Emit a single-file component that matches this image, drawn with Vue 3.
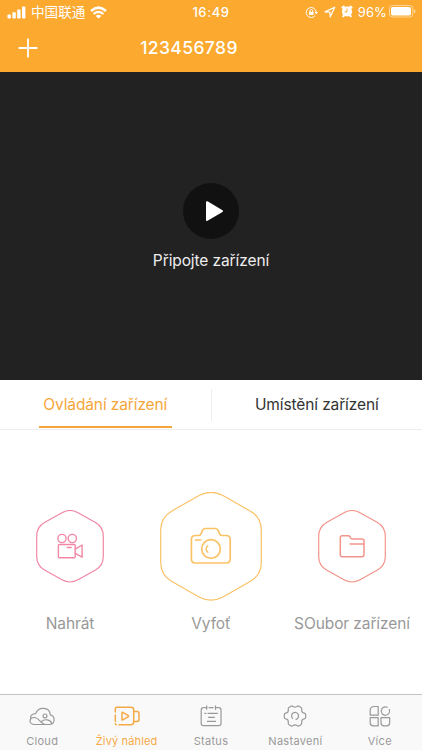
<script setup>
const actions = [
  { id: 'record', label: 'Nahrát' },
  { id: 'photo', label: 'Vyfoť' },
  { id: 'files', label: 'SOubor zařízení' },
]
const nav = [
  { id: 'cloud', label: 'Cloud' },
  { id: 'live', label: 'Živý náhled' },
  { id: 'status', label: 'Status' },
  { id: 'settings', label: 'Nastavení' },
  { id: 'more', label: 'Více' },
]
</script>

<template>
  <div class="screen">
    <header class="header">
      <div class="statusbar">
        <div class="side left">
          <svg class="signal" width="19" height="13" viewBox="0 0 19 13" fill="#fff">
            <rect x="0.5" y="8.5" width="3.4" height="4" rx="0.8" />
            <rect x="5.4" y="6.2" width="3.4" height="6.3" rx="0.8" />
            <rect x="10.2" y="3.6" width="3.4" height="8.9" rx="0.8" />
            <rect x="15" y="0.6" width="3.4" height="11.9" rx="0.8" />
          </svg>
          <span class="carrier">中国联通</span>
          <svg class="wifi" width="17" height="13" viewBox="0 0 17 13" fill="none" stroke="#fff">
            <path d="M1 5Q8.500-1.700 16 5" stroke-width="2.500" />
            <path d="M3.600 8Q8.500 3.800 13.400 8" stroke-width="2.300" />
            <path d="M8.500 12.600L5.700 9.900Q8.500 7.800 11.300 9.900Z" fill="#fff" stroke="none" />
          </svg>
        </div>
        <span class="time">16:49</span>
        <div class="side right">
          <svg class="lock" width="13" height="13" viewBox="0 0 13 13" fill="none" stroke="#fff">
            <path d="M10.300 9.400A5 5 0 1 1 11.200 6.100" stroke-width="1" />
            <path d="M9.500 5.900h3.500l-1.750 2.300z" fill="#fff" stroke="none" />
            <path d="M4.900 6V4.900a1.400 1.400 0 0 1 2.800 0V6" stroke-width="0.900" />
            <rect x="4.100" y="5.800" width="4.400" height="3.200" rx="0.500" fill="#fff" stroke="none" />
          </svg>
          <svg class="locate" width="12" height="12" viewBox="0 0 12 12" fill="none" stroke="#fff" stroke-linejoin="round">
            <path d="M1 5.900L10.700 1.200L6.200 10.900L5.900 6.100Z" stroke-width="1.200" />
          </svg>
          <svg class="alarm" width="12" height="13" viewBox="0 0 12 13">
            <path d="M1.500 2.600L2.700 1.600M10.500 2.600L9.300 1.600M2.300 11.200l.7-.8M9.700 11.200l-.7-.8" stroke="#fff" stroke-width="2.200" stroke-linecap="round" />
            <circle cx="6" cy="6.500" r="5.100" fill="#fff" />
            <path d="M6 3.600V6.900H3.500" fill="none" stroke="#fca92f" stroke-width="1" />
          </svg>
          <span class="percent">96%</span>
          <svg class="battery" width="27" height="13" viewBox="0 0 27 13">
            <rect x="0.500" y="0.500" width="23.400" height="11.500" rx="3" fill="none" stroke="#fed798" />
            <rect x="2" y="2" width="20" height="8.500" rx="1.700" fill="#fff" />
            <path d="M25 4.300q1.500 0.500 1.500 1.950t-1.500 1.950z" fill="#fed798" />
          </svg>
        </div>
      </div>
      <div class="titlebar">
        <svg class="plus" width="20" height="20" viewBox="0 0 20 20" stroke="#fff" stroke-width="1.800">
          <path d="M10 .5v19M.5 10h19" />
        </svg>
        <h1>123456789</h1>
      </div>
    </header>

    <section class="video">
      <button class="play" aria-label="Play">
        <svg width="56" height="56" viewBox="0 0 56 56">
          <path d="M24 19.200L39 28.100L24 37Z" fill="#fff" stroke="#fff" stroke-width="2" stroke-linejoin="round" />
        </svg>
      </button>
      <p>Připojte zařízení</p>
    </section>

    <div class="tabs">
      <div class="tab active"><span>Ovládání zařízení</span></div>
      <i class="divider"></i>
      <div class="tab"><span>Umístění zařízení</span></div>
    </div>

    <main class="actions">
      <div v-for="a in actions" :key="a.id" class="action" :class="a.id">
        <div class="hexbox">
          <svg v-if="a.id === 'record'" width="68" height="73" viewBox="0 0 68 73" fill="none" stroke="#f287a5">
            <path d="M.7 26Q.7 17 8.500 12.500L26 2.700Q34-1.700 42 2.700L59.500 12.500Q67.300 17 67.300 26V46.500Q67.300 55.500 59.500 60L42 69.800Q34 74.200 26 69.800L8.500 60Q.7 55.500 .7 46.500Z" stroke-width="1.200" />
            <g stroke-width="1.400" stroke-linejoin="round" stroke-linecap="round">
              <circle cx="26" cy="28.500" r="4.100" />
              <circle cx="36.300" cy="28.500" r="4.100" />
              <rect x="22.400" y="34.500" width="16.800" height="13.200" rx="1" />
              <path d="M31.200 37.500h4M39.200 39.100L46.100 35V47.200L39.200 43.400" />
            </g>
          </svg>
          <svg v-else-if="a.id === 'photo'" width="102" height="109" viewBox="0 0 102 109" fill="none" stroke="#fac267">
            <path d="M.7 38Q.7 25.500 11.500 19.200L39.500 3.300Q51-2.600 62.500 3.300L90.500 19.200Q101.300 25.500 101.300 38V70.500Q101.300 83 90.500 89.300L62.500 105.200Q51 111.100 39.500 105.200L11.500 89.300Q.7 83 .7 70.500Z" stroke-width="1.200" />
            <g stroke-width="1.700" stroke-linecap="round" stroke-linejoin="round">
              <path d="M35.500 43.500H38.500Q40.500 43.500 41.200 41.500L42.300 38.600Q43.100 36.500 45.300 36.500H55.300Q57.500 36.500 58.300 38.600L59.400 41.500Q60.100 43.500 62.100 43.500H66Q70.200 43.500 70.200 47.500V67Q70.200 71 66 71H35.500Q31.400 71 31.400 67V47.500Q31.400 43.500 35.500 43.500Z" />
              <circle cx="51" cy="57" r="9.300" />
              <path d="M35.300 48.100H41M47.800 53.800Q44.500 57 47.800 60.200" stroke-width="1.500" />
            </g>
          </svg>
          <svg v-else width="68" height="73" viewBox="0 0 68 73" fill="none" stroke="#f4958c">
            <path d="M.7 26Q.7 17 8.500 12.500L26 2.700Q34-1.700 42 2.700L59.500 12.500Q67.300 17 67.300 26V46.500Q67.300 55.500 59.500 60L42 69.800Q34 74.200 26 69.800L8.500 60Q.7 55.500 .7 46.500Z" stroke-width="1.200" />
            <g stroke-width="1.500" stroke-linecap="round" stroke-linejoin="round">
              <path d="M24.200 25.700H30.200Q31.300 25.700 31.900 26.700L32.700 28.100Q33.200 28.900 34.200 28.900H44Q46 28.900 46 30.900V44.600Q46 46.800 44 46.800H24.200Q22.300 46.800 22.300 44.600V27.700Q22.300 25.700 24.200 25.700Z" />
              <path d="M32.200 33.900H45.800" />
            </g>
          </svg>
        </div>
        <span class="caption">{{ a.label }}</span>
      </div>
    </main>

    <nav class="bottomnav">
      <div v-for="n in nav" :key="n.id" class="item" :class="[n.id, { current: n.id === 'live' }]">
        <svg width="28" height="24" viewBox="0 0 28 24" fill="none" stroke="currentColor" stroke-width="1.200" stroke-linecap="round" stroke-linejoin="round">
          <template v-if="n.id === 'cloud'">
            <path d="M6.500 20.500H21.300C27.500 20.500 27.500 11.800 22.200 10.800C21.800 2.600 10.200 2.300 7.700 9.600C4 9.600 1.900 12 2.800 14.800" />
            <path d="M6.500 20.500C.5 20.500.5 13.500 6.500 13.500C10.500 13.500 13.300 20.500 17.500 20.500M13.300 17.600C16.500 14.500 22.500 15.500 23.800 19.500" />
            <circle cx="17" cy="11.900" r="1.900" />
          </template>
          <template v-else-if="n.id === 'live'">
            <path d="M2.300 8V5Q2.300 3.300 4 3.300H18Q20.700 3.300 20.700 5.700V18.300Q20.700 20.700 18 20.700H6M2.300 11V17.200M2.300 19.800Q2.300 20.700 3.300 20.700" stroke-width="1.500" />
            <path d="M20.700 7.500H24.100Q26 7.500 26 9.400V15.500Q26 17.400 24.100 17.400H20.700" stroke-width="1.500" />
            <path d="M9 8.700Q9 7.900 9.800 8.300L15.300 11.600Q16 12.100 15.300 12.600L9.800 15.900Q9 16.300 9 15.500Z" stroke-width="1.500" />
          </template>
          <template v-else-if="n.id === 'status'">
            <path d="M6.500 3.600Q4.200 3.600 4.200 5.900V19.600Q4.200 21.700 6.300 21.700H21.900Q24 21.700 24 19.600V5.900Q24 3.600 21.700 3.600M7.500 3.600H10M12 3.600H16.200M18.200 3.600H20.700M9.700 1.900V5.300M18.500 1.900V5.300M7.800 9.300H9M11 9.300H20.500M11.500 13.300H17.500M10.500 17.400H18.500" />
          </template>
          <template v-else-if="n.id === 'settings'">
            <path d="M10.100 2.200Q11.100 1.600 12 2.500Q14 3.800 16 2.500Q16.900 1.600 17.900 2.200L20 3.400Q21 4 20.700 5.300C20.500 7.300 21.700 9 23.300 9.200Q24.700 9.500 24.700 10.900V13.200Q24.700 14.600 23.300 14.900C21.700 15.100 20.500 16.800 20.700 18.700Q21 20.100 20 20.700L17.900 21.900Q16.900 22.400 16 21.600Q14 20.200 12 21.600Q11.100 22.400 10.100 21.900L8 20.700Q7 20.100 7.300 18.700C7.500 16.800 6.300 15.100 4.700 14.900Q3.300 14.600 3.300 13.200V10.900Q3.300 9.500 4.700 9.200C6.300 9 7.500 7.300 7.300 5.300Q7 4 8 3.400Z" />
            <path d="M11.600 14.400A3.500 3.500 0 1 1 15 15.300" />
          </template>
          <template v-else>
            <path d="M4.200 11.200V6.500Q4.200 2.500 8.200 2.500H12.200V11.200ZM4.200 13.700H12.200V21.800H7.200Q4.200 21.800 4.200 18.800ZM15 13.700H23.700V18.800Q23.700 21.800 20.700 21.800H18Q15 21.800 15 18.800ZM21.200 3.300A4.200 4.200 0 1 0 23.300 5.500" />
          </template>
        </svg>
        <span>{{ n.label }}</span>
      </div>
    </nav>
  </div>
</template>

<style>
body { margin: 0; }
</style>

<style scoped>
.screen { width: 422px; height: 750px; display: flex; flex-direction: column; overflow: hidden; background: #fff; font-family: Inter, "Noto Sans CJK SC", sans-serif; }
.header { height: 72px; flex: none; background: #fca92f; color: #fff; }
.statusbar { height: 24px; display: grid; grid-template-columns: 1fr 60px 1fr; align-items: center; }
.side { display: flex; align-items: center; height: 24px; }
.left { padding-left: 7px; }
.carrier { margin: -2px 0 0 5px; font: 400 13.600px/24px "Noto Sans CJK SC", sans-serif; }
.wifi { margin-left: 5px; }
.time { text-align: center; font-size: 13px; font-weight: 500; letter-spacing: .6px; }
.right { justify-content: flex-end; padding-right: 6px; }
.locate { margin-left: 6px; }
.alarm { margin: -2px 0 0 5px; }
.percent { margin-left: 5px; font-size: 13px; letter-spacing: .1px; }
.battery { margin: -1px 0 0 2px; }
.titlebar { height: 48px; display: grid; grid-template-columns: 38px 302px 82px; align-items: center; }
.plus { margin: -1px 0 0 18px; }
h1 { margin: -1px 0 0; text-align: center; font-size: 17.500px; line-height: 24px; font-weight: 500; letter-spacing: .4px; }
.video { height: 308px; flex: none; background: #222; display: flex; flex-direction: column; align-items: center; padding-top: 111px; box-sizing: border-box; }
.play { width: 56px; height: 56px; border: 0; padding: 0; border-radius: 50%; background: #111; }
.play svg { display: block; }
.video p { margin: 10px 0 0; font-size: 15.500px; line-height: 24px; letter-spacing: -.1px; color: #eee; }
.tabs { height: 50px; flex: none; box-sizing: border-box; border-bottom: 1px solid #eee; display: flex; align-items: center; }
.tab { flex: 1; height: 49px; display: flex; justify-content: center; color: #333; font-size: 15.500px; letter-spacing: -.12px; line-height: 49px; }
.tab span { width: 133px; text-align: center; white-space: nowrap; height: 47px; }
.tab.active span { color: #f5a63a; border-bottom: 2px solid #f5a63a; height: 46px; }
.divider { width: 1px; height: 32px; background: #eee; }
.actions { height: 264px; flex: none; display: grid; grid-template-columns: 140px 142px 140px; padding-top: 61px; box-sizing: border-box; }
.action { display: flex; flex-direction: column; align-items: center; }
.hexbox { height: 110px; display: flex; align-items: flex-end; }
.hexbox svg { display: block; }
.record .hexbox, .files .hexbox { padding-bottom: 18px; box-sizing: border-box; }
.caption { margin-top: 11px; line-height: 24px; font-size: 15.500px; letter-spacing: -.1px; color: #999; white-space: nowrap; }
.bottomnav { height: 56px; flex: none; box-sizing: border-box; border-top: 1px solid #c4c4c4; background: #f9f9f9; display: grid; grid-template-columns: repeat(5, 1fr); }
.item { display: flex; flex-direction: column; align-items: center; padding-top: 9px; color: #999; font-size: 11px; letter-spacing: .3px; }
.item span { line-height: 16px; margin-top: 5px; }
.item.current { color: #f5aa48; }
.item.current span { letter-spacing: .15px; }
</style>
